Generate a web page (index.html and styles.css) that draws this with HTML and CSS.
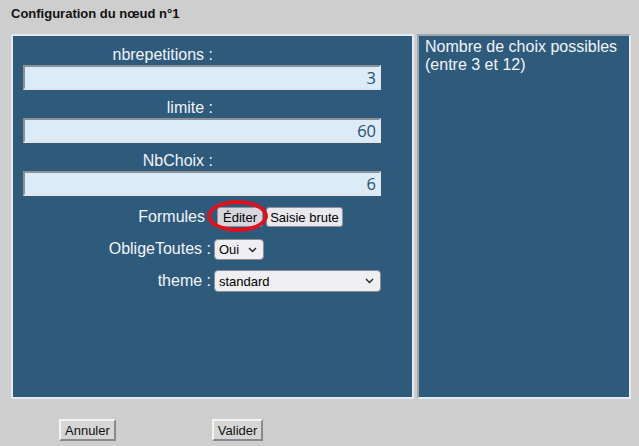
FILE: index.html
```html
<!DOCTYPE html>
<html lang="fr">
<head>
<meta charset="utf-8">
<title>Configuration du nœud n°1</title>
<link rel="stylesheet" href="styles.css">
</head>
<body>
<h1 class="title">Configuration du nœud n°1</h1>
<div class="main">
  <div class="panel">
    <div class="form">
      <div class="field">
        <label class="field-label">nbrepetitions :</label>
        <input class="field-input" type="text" value="3">
      </div>
      <div class="field">
        <label class="field-label">limite :</label>
        <input class="field-input" type="text" value="60">
      </div>
      <div class="field">
        <label class="field-label">NbChoix :</label>
        <input class="field-input" type="text" value="6">
      </div>
      <div class="controls">
        <div class="ctl-label ctl-label-formules">Formules</div>
        <div class="ctl-value">
          <span class="btn-wrap"><button class="btn btn-edit">Éditer</button><span class="ring"></span></span>
          <button class="btn btn-raw">Saisie brute</button>
        </div>
        <div class="ctl-label">ObligeToutes :</div>
        <div class="ctl-value">
          <span class="sel-wrap">
            <select class="sel sel-small"><option>Oui</option><option>Non</option></select>
            <svg class="chev" width="9" height="6" viewBox="0 0 9 6"><path d="M1 1 L4.5 4.5 L8 1" fill="none" stroke="#222" stroke-width="1.4"/></svg>
          </span>
        </div>
        <div class="ctl-label">theme :</div>
        <div class="ctl-value">
          <span class="sel-wrap">
            <select class="sel sel-wide"><option>standard</option></select>
            <svg class="chev" width="9" height="6" viewBox="0 0 9 6"><path d="M1 1 L4.5 4.5 L8 1" fill="none" stroke="#222" stroke-width="1.4"/></svg>
          </span>
        </div>
      </div>
    </div>
  </div>
  <div class="help">Nombre de choix possibles (entre 3 et 12)</div>
</div>
<div class="footer">
  <button class="cbtn">Annuler</button>
  <button class="cbtn">Valider</button>
</div>
</body>
</html>
```

FILE: styles.css
```css
html, body {
  margin: 0;
  padding: 0;
  background: #cecece;
  width: 639px;
  height: 446px;
  overflow: hidden;
  font-family: "Liberation Sans", Arial, sans-serif;
}

.title {
  margin: 0;
  padding: 6px 11px 0 11px;
  font-size: 13px;
  line-height: 15px;
  font-weight: bold;
  color: #111;
}

.main {
  display: flex;
  gap: 3px;
  margin: 13px 0 0 11px;
  height: 365px;
}

.panel {
  box-sizing: border-box;
  width: 403px;
  height: 365px;
  background: #2e5a7c;
  border: 2px solid #e3ecf4;
  padding: 9px 0 0 10px;
}

.form {
  width: 358px;
  display: flex;
  flex-direction: column;
}

.field {
  display: flex;
  flex-direction: column;
}

.field + .field {
  margin-top: 8px;
}

.field-label {
  display: block;
  width: 190px;
  text-align: right;
  font-size: 16px;
  line-height: 20px;
  height: 20px;
  color: #f2f5f8;
}

.field-input {
  box-sizing: border-box;
  width: 358px;
  height: 25px;
  margin: 0;
  padding: 0 3px 0 3px;
  border: 2px solid;
  border-color: #8c9296 #e2e6ea #e2e6ea #8c9296;
  background: #dbebf8;
  color: #2c4f70;
  font-family: "Open Sans", "DejaVu Sans", sans-serif;
  font-size: 16.5px;
  text-align: right;
  outline: none;
}

.controls {
  display: grid;
  grid-template-columns: 188px 170px;
  grid-auto-rows: 22px;
  row-gap: 10px;
  margin-top: 10px;
  align-items: center;
}

.ctl-label {
  text-align: right;
  font-size: 16px;
  line-height: 20px;
  color: #f2f5f8;
  padding-right: 0;
}

.ctl-label-formules {
  padding-right: 6px;
}

.ctl-value {
  display: flex;
  align-items: center;
  gap: 3px;
  padding-left: 3px;
}

.btn-wrap {
  position: relative;
  display: inline-flex;
  margin-left: 3px;
}

.btn {
  box-sizing: border-box;
  height: 20px;
  margin: 0;
  padding: 0;
  border: 1px solid #8f8f9d;
  border-radius: 3px;
  background: #e9e9ed;
  color: #000;
  font-family: "Liberation Sans", Arial, sans-serif;
  font-size: 13px;
  text-align: center;
}

.btn-edit {
  width: 46px;
  background: #d6d6dc;
}

.btn-raw {
  width: 77px;
}

.ring {
  position: absolute;
  left: -10px;
  top: -7px;
  width: 61px;
  height: 32px;
  box-sizing: border-box;
  border: 4px solid #e0101c;
  border-radius: 50%;
  pointer-events: none;
}

.sel-wrap {
  position: relative;
  display: inline-flex;
}

.sel {
  box-sizing: border-box;
  height: 21px;
  margin: 0;
  padding: 0 0 0 4px;
  appearance: none;
  -webkit-appearance: none;
  border: 1px solid #8d8d96;
  border-radius: 4px;
  background: #efeff2;
  font-family: "Liberation Sans", Arial, sans-serif;
  font-size: 13px;
  color: #000;
}

.chev {
  position: absolute;
  right: 7px;
  top: 8px;
  pointer-events: none;
}

.sel-small {
  width: 50px;
}

.sel-wide {
  width: 167px;
  height: 22px;
}

.help {
  box-sizing: border-box;
  width: 214px;
  height: 365px;
  background: #2e5a7c;
  border: 2px solid;
  border-color: #9ea6ad #e3ecf4 #e3ecf4 #9ea6ad;
  padding: 2px 6px 0 6px;
  font-size: 16px;
  line-height: 18px;
  color: #f2f5f8;
}

.footer {
  display: flex;
  gap: 96px;
  padding-left: 59px;
  margin-top: 20px;
}

.cbtn {
  box-sizing: border-box;
  height: 22px;
  margin: 0;
  padding: 0 4px;
  background: #d6d6d6;
  border: 2px solid;
  border-color: #f4f4f4 #8a8a8a #8a8a8a #f4f4f4;
  border-radius: 0;
  font-family: "Liberation Sans", Arial, sans-serif;
  font-size: 13px;
  color: #111;
}
```
